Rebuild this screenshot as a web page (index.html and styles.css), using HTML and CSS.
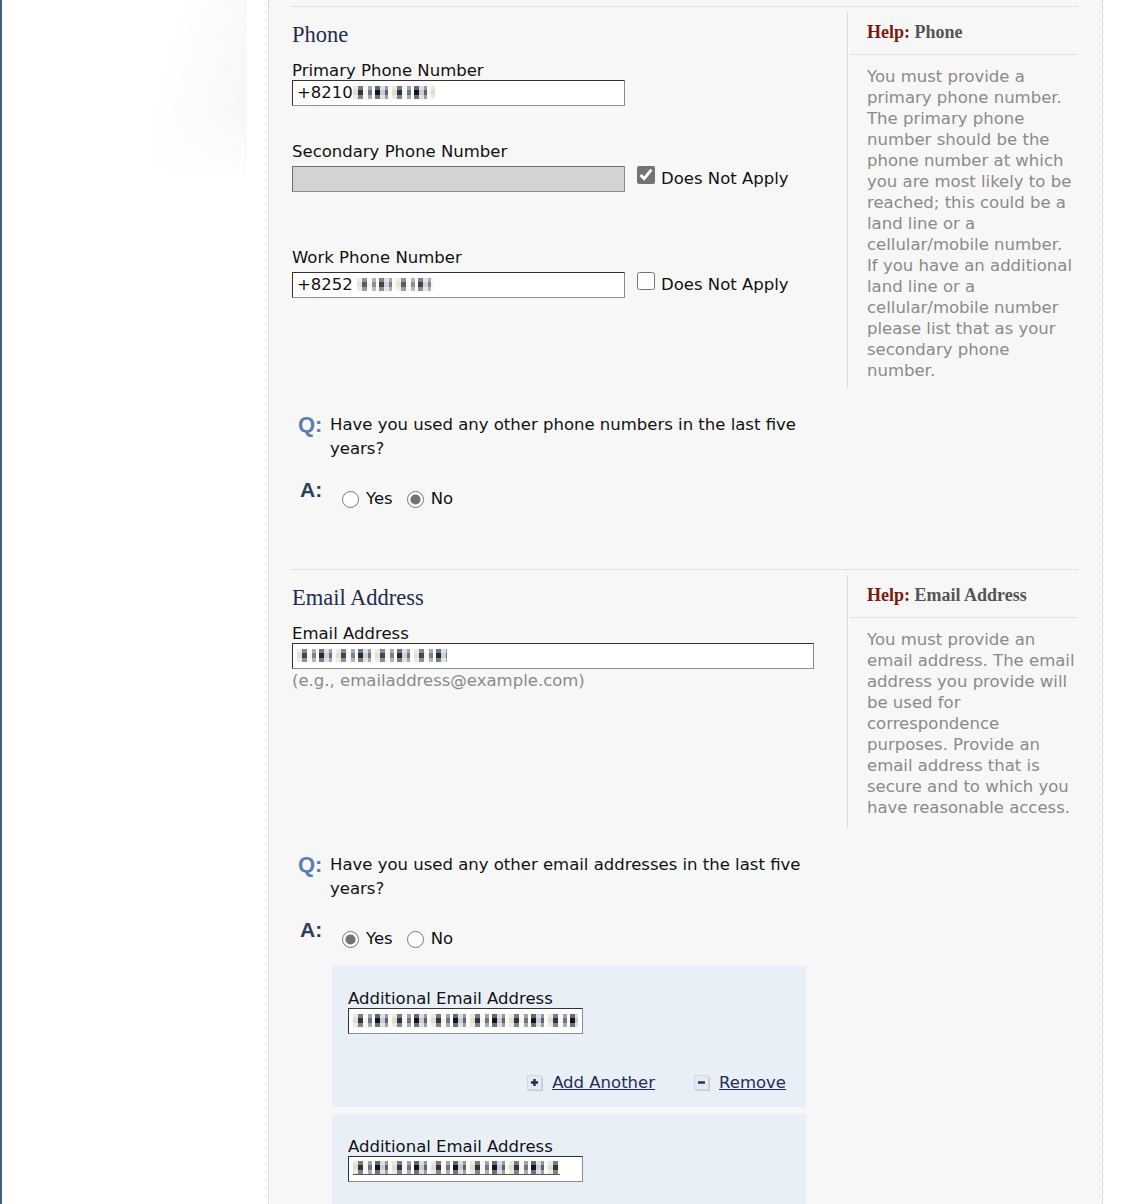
FILE: index.html
```html
<!DOCTYPE html>
<html>
<head>
  <meta charset="UTF-8">
  <title>Contact Information</title>
  <link rel="stylesheet" href="styles.css">
</head>
<body>
  <div class="page">
    <div class="sidebar">
      <div class="side-shade"></div>
    </div>

    <div class="panel">
      <!-- Phone -->
      <div class="section">
        <div class="section-row">
          <div class="form-col">
            <h2>Phone</h2>
            <div class="form-group">
              <label>Primary Phone Number</label>
              <div class="field">+8210<span class="redact r1"></span></div>
            </div>
            <div class="form-group spaced">
              <label class="gap-label">Secondary Phone Number</label>
              <div class="check-row">
                <div class="field disabled"></div>
                <input type="checkbox" checked>
                <span class="check-text">Does Not Apply</span>
              </div>
            </div>
            <div class="form-group spaced-lg">
              <label class="gap-label">Work Phone Number</label>
              <div class="check-row">
                <div class="field">+8252<span class="redact r2"></span></div>
                <input type="checkbox">
                <span class="check-text">Does Not Apply</span>
              </div>
            </div>
          </div>
          <div class="help-col">
            <div class="help-title"><span class="help-word">Help:</span> Phone</div>
            <p class="help-text">You must provide a primary phone number. The primary phone number should be the phone number at which you are most likely to be reached; this could be a land line or a cellular/mobile number. If you have an additional land line or a cellular/mobile number please list that as your secondary phone number.</p>
          </div>
        </div>

        <div class="question">
          <span class="q-mark">Q:</span>
          <span class="q-text">Have you used any other phone numbers in the last five years?</span>
        </div>
        <div class="answer">
          <span class="a-mark">A:</span>
          <label class="radio"><input type="radio" name="phone-other"> Yes</label>
          <label class="radio"><input type="radio" name="phone-other" checked> No</label>
        </div>
      </div>

      <!-- Email -->
      <div class="section">
        <div class="section-row">
          <div class="form-col">
            <h2>Email Address</h2>
            <div class="form-group">
              <label>Email Address</label>
              <div class="field wide"><span class="redact r3"></span></div>
              <div class="hint">(e.g., emailaddress@example.com)</div>
            </div>
          </div>
          <div class="help-col">
            <div class="help-title"><span class="help-word">Help:</span> Email Address</div>
            <p class="help-text">You must provide an email address. The email address you provide will be used for correspondence purposes. Provide an email address that is secure and to which you have reasonable access.</p>
          </div>
        </div>

        <div class="question">
          <span class="q-mark">Q:</span>
          <span class="q-text">Have you used any other email addresses in the last five years?</span>
        </div>
        <div class="answer">
          <span class="a-mark">A:</span>
          <label class="radio"><input type="radio" name="email-other" checked> Yes</label>
          <label class="radio"><input type="radio" name="email-other"> No</label>
        </div>

        <div class="extra-box">
          <label>Additional Email Address</label>
          <div class="field short"><span class="redact r4"></span></div>
          <div class="box-links">
            <a href="#" class="box-link">
              <svg class="btn-icon" width="16" height="16" viewBox="0 0 16 16"><rect x="2" y="2" width="14" height="14" fill="#c3ccd8"/><rect x="0.5" y="0.5" width="14" height="14" fill="#e4eaf2" stroke="#d2d9e3"/><path d="M7.5 4v7M4 7.5h7" stroke="#1f2d5a" stroke-width="2.4"/></svg>
              Add Another</a>
            <a href="#" class="box-link">
              <svg class="btn-icon" width="16" height="16" viewBox="0 0 16 16"><rect x="2" y="2" width="14" height="14" fill="#c3ccd8"/><rect x="0.5" y="0.5" width="14" height="14" fill="#e4eaf2" stroke="#d2d9e3"/><path d="M4 7.5h7" stroke="#1f2d5a" stroke-width="2.4"/></svg>
              Remove</a>
          </div>
        </div>

        <div class="extra-box">
          <label>Additional Email Address</label>
          <div class="field short"><span class="redact r5"></span></div>
        </div>
      </div>
    </div>

    <div class="outside"></div>
  </div>
</body>
</html>
```

FILE: styles.css
```css
body {
  margin: 0;
  font-family: "DejaVu Sans", Verdana, sans-serif;
  font-size: 16.5px;
  color: #111;
  background: #fff;
}
.page {
  display: flex;
  min-height: 1204px;
}
.sidebar {
  width: 266px;
  border-left: 2px solid #3d6284;
  display: flex;
  justify-content: flex-end;
  align-items: flex-start;
}
.side-shade {
  width: 100px;
  height: 184px;
  margin-right: 21px;
  background: linear-gradient(105deg, rgba(245,245,245,0) 20%, #f5f5f5 100%);
  -webkit-mask-image: linear-gradient(to bottom, #000 60%, transparent 100%);
  mask-image: linear-gradient(to bottom, #000 60%, transparent 100%);
}
.panel {
  width: 786px;
  padding: 6px 24px 0 23px;
  background: #f7f7f7;
  border-left: 1px dotted #c8c8c8;
  border-right: 1px dotted #c8c8c8;
}
.outside {
  flex: 1;
}

/* sections */
.section {
  border-top: 1px dotted #cfcfcf;
  padding-bottom: 61px;
}
.section-row {
  display: flex;
}
.form-col {
  width: 555px;
}
h2 {
  margin: 16px 0 15px;
  font-family: "Liberation Serif", "Times New Roman", serif;
  font-weight: normal;
  font-size: 22.5px;
  line-height: 24px;
  color: #1e2c50;
}
label {
  display: block;
  line-height: 18px;
}
.gap-label {
  margin-bottom: 5px;
}
.form-group.spaced {
  margin-top: 37px;
}
.form-group.spaced-lg {
  margin-top: 57px;
}
.field {
  box-sizing: border-box;
  width: 333px;
  height: 26px;
  padding: 0 4px;
  line-height: 24px;
  background: #fff;
  border: 1px solid;
  border-color: #333 #8c8c8c #8c8c8c #333;
  white-space: nowrap;
  overflow: hidden;
}
.field.disabled {
  background: #d3d3d3;
  border-color: #6e6e6e #8c8c8c #8c8c8c #6e6e6e;
}
.field.wide {
  width: 522px;
}
.field.short {
  width: 235px;
}
.redact {
  display: inline-block;
  height: 13px;
  vertical-align: -1px;
  background:
    linear-gradient(180deg, rgba(255,255,255,0.35) 0 4px, transparent 4px 9px, rgba(255,255,255,0.4) 9px),
    repeating-linear-gradient(90deg, #e2ddcf 0 5px, #2e3440 5px 10px, #f6f4ee 10px 15px, #6e7583 15px 19px, #fff 19px 22px, #11151d 22px 27px, #c8ccd4 27px 32px, #5b6270 32px 35px, #fbf8ef 35px 39px);
}
.r1 { width: 82px; }
.r2 { width: 78px; margin-left: 4px; opacity: 0.8; }
.r3 { width: 150px; opacity: 0.9; }
.r4 { width: 225px; }
.r5 { width: 207px; border-bottom: 1px solid #555; }
.check-row {
  display: flex;
  align-items: flex-start;
}
.check-row input[type="checkbox"] {
  width: 18px;
  height: 18px;
  margin: 0 0 0 12px;
  accent-color: #737373;
}
.check-text {
  margin: 4px 0 0 6px;
  line-height: 18px;
}
.hint {
  margin-top: 3px;
  line-height: 18px;
  color: #8a8a8a;
}

/* help column */
.help-col {
  width: 229px;
  margin-top: 5px;
  border-left: 1px solid #dcdcdc;
}
.help-title {
  margin-left: 2px;
  padding: 10px 0 12px 17px;
  line-height: 20px;
  font-family: "Liberation Serif", "Times New Roman", serif;
  font-weight: bold;
  font-size: 18px;
  color: #555;
  border-bottom: 1px dotted #cfcfcf;
}
.help-word {
  color: #7b1a0c;
}
.help-text {
  margin: 0;
  padding: 11px 0 7px 19px;
  line-height: 21px;
  color: #8a8a8a;
}
.section + .section .help-text {
  padding-bottom: 10px;
}

/* question and answer */
.question {
  display: flex;
  margin-top: 25px;
  padding-left: 6px;
}
.q-mark {
  width: 32px;
  flex-shrink: 0;
  font-family: "Liberation Sans", Arial, sans-serif;
  font-weight: bold;
  font-size: 22px;
  line-height: 24px;
  color: #5a7db5;
}
.q-text {
  width: 480px;
  line-height: 24px;
}
.answer {
  display: flex;
  align-items: center;
  margin-top: 29px;
  padding-left: 8px;
}
.a-mark {
  width: 42px;
  align-self: flex-start;
  margin-top: -12px;
  font-family: "Liberation Sans", Arial, sans-serif;
  font-weight: bold;
  font-size: 21px;
  line-height: 24px;
  color: #2b3d60;
}
.radio {
  display: flex;
  align-items: center;
  margin-right: 14px;
}
.radio input {
  width: 17px;
  height: 17px;
  margin: 0 7px 0 0;
  accent-color: #737373;
}

/* repeating email box */
.extra-box {
  margin: 17px 0 0 39px;
  width: 476px;
  box-sizing: border-box;
  padding: 24px 20px 14px 16px;
  background: #e8eff7;
  border: 1px solid #f3f6fa;
}
.extra-box + .extra-box {
  margin-top: 5px;
  padding-bottom: 30px;
}
.box-links {
  display: flex;
  justify-content: flex-end;
  gap: 39px;
  margin-top: 39px;
}
.box-link {
  display: flex;
  align-items: center;
  gap: 9px;
  line-height: 20px;
  color: #1f2d5a;
}
.btn-icon {
  display: block;
}
```
